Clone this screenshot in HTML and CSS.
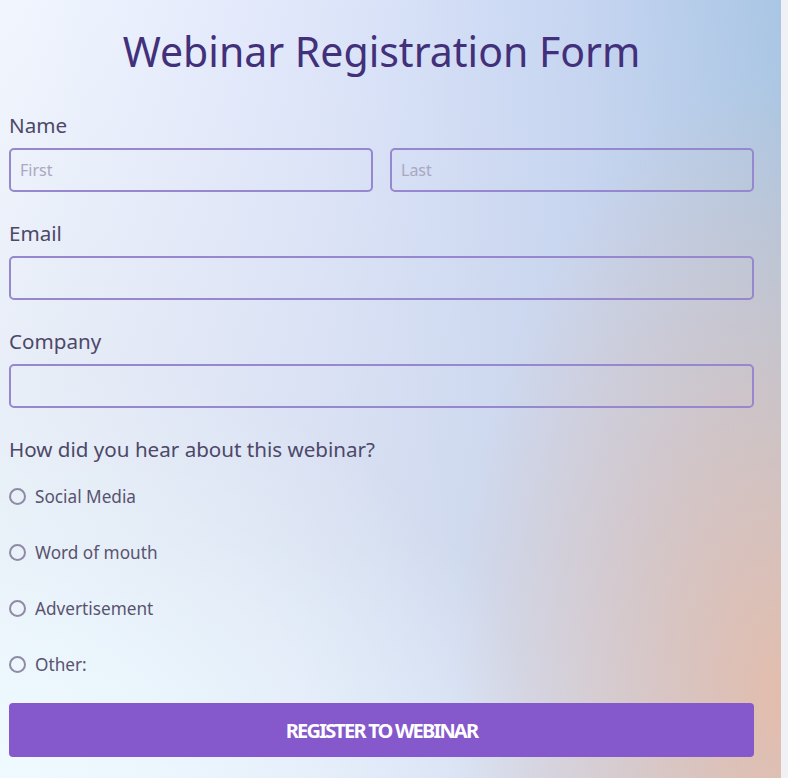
FILE: index.html
```html
<!DOCTYPE html>
<html lang="en">
<head>
<meta charset="utf-8">
<title>Webinar Registration Form</title>
<link rel="stylesheet" href="styles.css">
</head>
<body>
<form class="reg-form">
  <h1 class="title">Webinar Registration Form</h1>

  <div class="field">
    <label class="label">Name</label>
    <div class="name-row">
      <input class="input" type="text" placeholder="First">
      <input class="input" type="text" placeholder="Last">
    </div>
  </div>

  <div class="field">
    <label class="label">Email</label>
    <input class="input" type="email">
  </div>

  <div class="field">
    <label class="label">Company</label>
    <input class="input" type="text">
  </div>

  <div class="field">
    <label class="label">How did you hear about this webinar?</label>
    <div class="radio-list">
      <label class="radio-row"><input class="radio" type="radio" name="src"><span>Social Media</span></label>
      <label class="radio-row"><input class="radio" type="radio" name="src"><span>Word of mouth</span></label>
      <label class="radio-row"><input class="radio" type="radio" name="src"><span>Advertisement</span></label>
      <label class="radio-row"><input class="radio" type="radio" name="src"><span>Other:</span></label>
    </div>
  </div>

  <button class="submit" type="button">REGISTER TO WEBINAR</button>
</form>
</body>
</html>
```

FILE: styles.css
```css
html, body {
  margin: 0;
  padding: 0;
}

body {
  background: #eff1f4;
  font-family: "Noto Sans", "Open Sans", sans-serif;
  width: 788px;
  height: 778px;
  overflow: hidden;
}

.reg-form {
  width: 781px;
  height: 778px;
  box-sizing: border-box;
  padding: 25px 27px 0 9px;
  background:
    radial-gradient(ellipse 42% 80% at 100% 90%, rgba(229, 188, 170, 0.95) 0%, rgba(229, 188, 170, 0) 100%),
    radial-gradient(ellipse 70% 55% at 0% 100%, rgba(238, 250, 255, 1) 0%, rgba(238, 250, 255, 0) 100%),
    linear-gradient(180deg, rgba(200, 205, 220, 0) 0%, rgba(205, 212, 225, 0.35) 70%, rgba(225, 232, 240, 0.3) 100%),
    linear-gradient(90deg, #f1f6fe 0%, #dfe6fa 40%, #c6d5f1 75%, #a9c6e4 100%);
}

.title {
  margin: 0 0 34px;
  font-size: 41px;
  font-weight: 400;
  line-height: 52px;
  text-align: center;
  color: #42307a;
}

.field {
  margin-bottom: 27px;
}

.label {
  display: block;
  font-size: 20.6px;
  line-height: 28px;
  color: #4d4869;
  margin-bottom: 9px;
}

.name-row {
  display: flex;
  gap: 17px;
}

.input {
  display: block;
  width: 100%;
  height: 44px;
  box-sizing: border-box;
  margin: 0;
  padding: 0 9px;
  border: 2px solid #9787cf;
  border-radius: 5px;
  background: transparent;
  font-family: "Noto Sans", "Open Sans", sans-serif;
  font-size: 16px;
  color: #4d4869;
  outline: none;
}

.input::placeholder {
  color: #aaa7c2;
}

.radio-list {
  display: flex;
  flex-direction: column;
  gap: 32px;
  margin-top: 21px;
}

.radio-row {
  display: flex;
  align-items: center;
  gap: 9px;
  height: 24px;
  font-size: 17.2px;
  color: #58536f;
}

.radio {
  appearance: none;
  -webkit-appearance: none;
  margin: 0;
  width: 17px;
  height: 17px;
  box-sizing: border-box;
  border: 2px solid #8f8ba6;
  border-radius: 50%;
  background: transparent;
  flex: none;
}

.submit {
  display: block;
  width: 100%;
  height: 54px;
  margin-top: 2px;
  border: none;
  border-radius: 4px;
  background: #8558cc;
  color: #ffffff;
  font-family: "Noto Sans", "Open Sans", sans-serif;
  font-size: 20px;
  font-weight: 700;
  letter-spacing: -1.8px;
}
```
